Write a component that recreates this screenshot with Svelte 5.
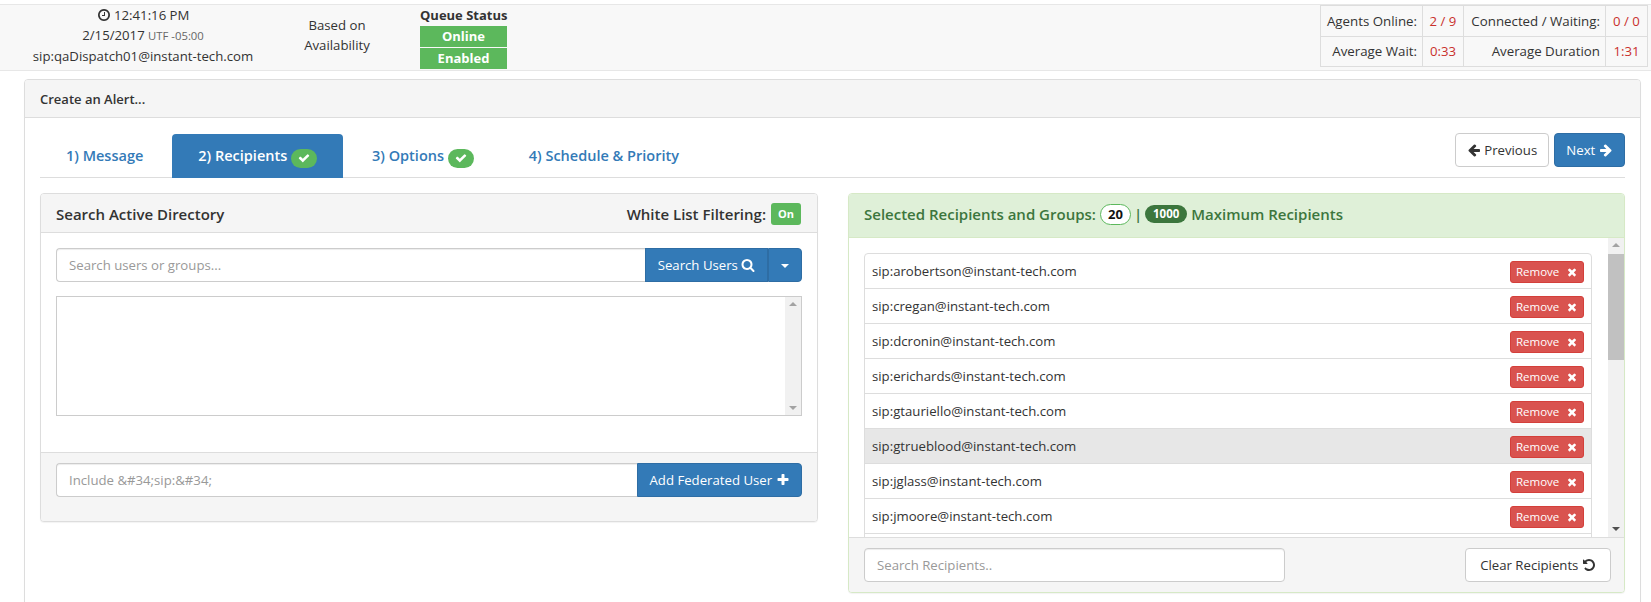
<script lang="ts">
    const icons = {
        clock: 'M1024 544v448q0 14-9 23t-23 9h-320q-14 0-23-9t-9-23v-64q0-14 9-23t23-9h224v-352q0-14 9-23t23-9h64q14 0 23 9t9 23zm416 352q0-148-73-273t-198-198-273-73-273 73-198 198-73 273 73 273 198 198 273 73 273-73 198-198 73-273zm224 0q0 209-103 385.5t-279.5 279.5-385.5 103-385.5-103-279.5-279.5-103-385.5 103-385.5 279.5-279.5 385.5-103 385.5 103 279.5 279.5 103 385.5z',
        check: 'M1671 566q0 40-28 68l-724 724-136 136q-28 28-68 28t-68-28l-136-136-362-362q-28-28-28-68t28-68l136-136q28-28 68-28t68 28l294 295 656-657q28-28 68-28t68 28l136 136q28 28 28 68z',
        times: 'M1490 1322q0 40-28 68l-136 136q-28 28-68 28t-68-28l-294-294-294 294q-28 28-68 28t-68-28l-136-136q-28-28-28-68t28-68l294-294-294-294q-28-28-28-68t28-68l136-136q28-28 68-28t68 28l294 294 294-294q28-28 68-28t68 28l136 136q28 28 28 68t-28 68l-294 294 294 294q28 28 28 68z',
        plus: 'M1600 736v192q0 40-28 68t-68 28h-416v416q0 40-28 68t-68 28h-192q-40 0-68-28t-28-68v-416h-416q-40 0-68-28t-28-68v-192q0-40 28-68t68-28h416v-416q0-40 28-68t68-28h192q40 0 68 28t28 68v416h416q40 0 68 28t28 68z',
        search: 'M1216 832q0-185-131.5-316.5t-316.5-131.5-316.5 131.5-131.5 316.5 131.5 316.5 316.5 131.5 316.5-131.5 131.5-316.5zm512 832q0 52-38 90t-90 38q-54 0-90-38l-343-342q-179 124-399 124-143 0-273.5-55.5t-225-150-150-225-55.5-273.5 55.5-273.5 150-225 225-150 273.5-55.5 273.5 55.5 225 150 150 225 55.5 273.5q0 220-124 399l343 343q37 37 37 90z',
        left: 'M1664 896v128q0 53-32.5 90.5t-84.5 37.5h-704l293 294q38 36 38 90t-38 90l-75 76q-37 37-90 37-52 0-91-37l-651-652q-37-37-37-90 0-52 37-91l651-650q38-38 91-38 52 0 90 38l75 74q38 38 38 91t-38 91l-293 293h704q52 0 84.5 37.5t32.5 90.5z',
        right: 'M1600 960q0 54-37 91l-651 651q-39 37-91 37-51 0-90-37l-75-75q-38-38-38-91t38-91l293-293h-704q-52 0-84.5-37.5t-32.5-90.5v-128q0-53 32.5-90.5t84.5-37.5h704l-293-294q-38-36-38-90t38-90l75-75q38-38 90-38 53 0 91 38l651 651q37 35 37 90z',
        undo: 'M1664 896q0 156-61 298t-164 245-245 164-298 61q-172 0-327-72.5t-264-204.5q-7-10-6.5-22.5t8.5-20.5l137-138q10-9 25-9 16 2 23 12 73 95 179 147t225 52q104 0 198.5-40.5t163.5-109.5 109.5-163.5 40.5-198.5-40.5-198.5-109.5-163.5-163.5-109.5-198.5-40.5q-98 0-188 35.5t-160 101.5l137 138q31 30 14 69-17 40-59 40h-448q-26 0-45-19t-19-45v-448q0-42 40-59 39-17 69 14l130 129q107-101 244.5-156.5t284.5-55.5q156 0 298 61t245 164 164 245 61 298z'
    };

    // last row is cut off by the scroll area, same as the real list
    const recipients = [
        'arobertson', 'cregan', 'dcronin', 'erichards', 'gtauriello',
        'gtrueblood', 'jglass', 'jmoore'
    ];
    const hovered = 'gtrueblood';
</script>

{#snippet icon(name: keyof typeof icons)}
    <svg class="icon" viewBox="0 0 1792 1792" aria-hidden="true"><path d={icons[name]} /></svg>
{/snippet}

{#snippet okBadge()}
    <span class="ok-badge">{@render icon('check')}</span>
{/snippet}

<header class="status-bar">
    <div class="clock-cell">
        <div>{@render icon('clock')} 12:41:16 PM</div>
        <div>2/15/2017 <small>UTF -05:00</small></div>
        <div>sip:qaDispatch01@instant-tech.com</div>
    </div>
    <div class="based-cell">Based on<br />Availability</div>
    <div class="queue-cell">
        <div class="queue-title">Queue Status</div>
        <div class="queue-pill">Online</div>
        <div class="queue-pill">Enabled</div>
    </div>
    <table class="stats">
        <tbody>
            <tr>
                <td class="lbl w1">Agents Online:</td>
                <td class="val w2">2 / 9</td>
                <td class="lbl w3">Connected / Waiting:</td>
                <td class="val w4">0 / 0</td>
            </tr>
            <tr>
                <td class="lbl">Average Wait:</td>
                <td class="val">0:33</td>
                <td class="lbl">Average Duration</td>
                <td class="val">1:31</td>
            </tr>
        </tbody>
    </table>
</header>

<main class="alert-panel">
    <div class="alert-heading">Create an Alert...</div>
    <div class="alert-body">
        <div class="wizard-nav">
            <nav class="tabs">
                <a class="tab">1) Message</a>
                <a class="tab active">2) Recipients {@render okBadge()}</a>
                <a class="tab">3) Options {@render okBadge()}</a>
                <a class="tab">4) Schedule &amp; Priority</a>
            </nav>
            <div class="wizard-btns">
                <button class="btn btn-default prev-btn">{@render icon('left')} Previous</button>
                <button class="btn btn-primary next-btn">Next {@render icon('right')}</button>
            </div>
        </div>

        <div class="columns">
            <section class="panel search-panel">
                <div class="panel-heading">
                    <span>Search Active Directory</span>
                    <span class="filter">White List Filtering: <span class="on-label">On</span></span>
                </div>
                <div class="search-body">
                    <div class="input-group">
                        <input class="form-control" placeholder="Search users or groups..." />
                        <button class="btn btn-primary joined search-btn">Search Users {@render icon('search')}</button>
                        <button class="btn btn-primary caret-btn" aria-label="More"><span class="caret"></span></button>
                    </div>
                    <div class="results-box">
                        <div class="scrollbar">
                            <span class="arrow up"></span>
                            <span class="arrow down"></span>
                        </div>
                    </div>
                </div>
                <div class="panel-footer federated">
                    <div class="input-group">
                        <input class="form-control" placeholder="Include &amp;#34;sip:&amp;#34;" />
                        <button class="btn btn-primary joined add-btn">Add Federated User {@render icon('plus')}</button>
                    </div>
                </div>
            </section>

            <section class="panel selected-panel">
                <div class="panel-heading success">
                    <span>Selected Recipients and Groups:</span>
                    <span class="count">20</span>
                    <span class="pipe">|</span>
                    <span class="max">1000</span>
                    <span>Maximum Recipients</span>
                </div>
                <div class="recipient-scroll">
                    <ul class="list">
                        {#each recipients as name}
                            <li class="list-item" class:hover={name === hovered}>
                                <span>sip:{name}@instant-tech.com</span>
                                <button class="btn-remove">Remove {@render icon('times')}</button>
                            </li>
                        {/each}
                        <li class="list-item"></li>
                    </ul>
                    <div class="scrollbar">
                        <span class="arrow up"></span>
                        <span class="thumb"></span>
                        <span class="arrow down"></span>
                    </div>
                </div>
                <div class="panel-footer recipient-footer">
                    <input class="form-control rounded" placeholder="Search Recipients.." />
                    <button class="btn btn-default clear-btn">Clear Recipients {@render icon('undo')}</button>
                </div>
            </section>
        </div>
    </div>
</main>

<style>
    :global(body) {
        margin: 0;
        overflow: hidden;
        background: #fff;
        color: #333;
        font-family: "Open Sans", "Liberation Sans", sans-serif;
        font-size: 13.2px;
        line-height: 20px;
    }

    * {
        box-sizing: border-box;
    }

    .icon {
        display: inline-block;
        width: 14px;
        height: 14px;
        fill: currentColor;
        vertical-align: -2px;
    }

    .status-bar {
        display: flex;
        height: 67px;
        margin-top: 4px;
        background: #f8f8f8;
        border-top: 1px solid #e7e7e7;
        border-bottom: 1px solid #e7e7e7;
    }

    .clock-cell {
        width: 286px;
        text-align: center;
    }

    .clock-cell small {
        font-size: 11.3px;
        color: #666;
    }

    .based-cell {
        width: 102px;
        padding-top: 10px;
        text-align: center;
    }

    .queue-cell {
        width: 87px;
        margin-left: 32px;
        text-align: center;
    }

    .queue-title {
        font-size: 13px;
        font-weight: 700;
        line-height: 21px;
        white-space: nowrap;
    }

    .queue-pill {
        height: 21px;
        margin-bottom: 1px;
        background: #5cb85c;
        color: #fff;
        font-size: 13px;
        font-weight: 700;
        line-height: 21px;
    }

    .stats {
        width: 327px;
        height: 62px;
        margin-left: auto;
        margin-right: 3px;
        border-collapse: collapse;
        table-layout: fixed;
    }

    .stats td {
        padding: 0 5px;
        border: 1px solid #ddd;
        white-space: nowrap;
    }

    .lbl {
        font-size: 13.3px;
        text-align: right;
    }

    .val {
        text-align: center;
        color: #c9302c;
    }

    .w1 { width: 102px; }
    .w2 { width: 41px; }
    .w3 { width: 142px; }
    .w4 { width: 42px; }

    .alert-panel {
        width: 1617px;
        height: 600px;
        margin: 8px 0 0 24px;
        border: 1px solid #ddd;
        border-radius: 4px;
        box-shadow: 0 1px 1px rgba(0, 0, 0, 0.05);
    }

    .alert-heading {
        height: 38px;
        padding: 9px 15px;
        background: #f5f5f5;
        border-bottom: 1px solid #ddd;
        border-radius: 3px 3px 0 0;
        font-size: 13px;
        font-weight: 600;
    }

    .alert-body {
        padding: 16px 15px;
    }

    .wizard-nav {
        display: flex;
        justify-content: space-between;
        height: 44px;
        border-bottom: 1px solid #ddd;
    }

    .tabs {
        display: flex;
    }

    .tab {
        height: 44px;
        margin-right: 3px;
        padding: 12px 26px 0;
        border-radius: 4px 4px 0 0;
        color: #337ab7;
        font-size: 14.5px;
        font-weight: 600;
        white-space: nowrap;
    }

    .tab.active {
        background: #337ab7;
        color: #fff;
    }

    .ok-badge {
        display: inline-flex;
        align-items: center;
        justify-content: center;
        width: 26px;
        height: 19px;
        border-radius: 10px;
        background: #5cb85c;
        color: #fff;
        vertical-align: -3px;
    }

    .ok-badge .icon {
        width: 12px;
        height: 12px;
    }

    .wizard-btns {
        display: flex;
        gap: 5px;
        margin-top: -1px;
        height: 34px;
    }

    .btn {
        height: 34px;
        padding: 6px 12px;
        border: 1px solid transparent;
        border-radius: 4px;
        font: inherit;
        white-space: nowrap;
    }

    .btn-default {
        background: #fff;
        border-color: #ccc;
        color: #333;
    }

    .btn-primary {
        background: #337ab7;
        border-color: #2e6da4;
        color: #fff;
    }

    .prev-btn {
        width: 94px;
        padding: 6px 0;
    }

    .next-btn {
        width: 71px;
        padding: 6px 0;
    }

    .columns {
        display: flex;
        justify-content: space-between;
        align-items: flex-start;
        margin-top: 15px;
    }

    .panel {
        border: 1px solid #ddd;
        border-radius: 4px;
        box-shadow: 0 1px 1px rgba(0, 0, 0, 0.05);
        background: #fff;
    }

    .search-panel {
        width: 778px;
        height: 329px;
    }

    .selected-panel {
        width: 777px;
        height: 400px;
        border-color: #d6e9c6;
    }

    .panel-heading {
        display: flex;
        align-items: center;
        height: 39px;
        padding: 2px 15px 0;
        justify-content: space-between;
        background: #f5f5f5;
        border-bottom: 1px solid #ddd;
        border-radius: 3px 3px 0 0;
        font-size: 15px;
        font-weight: 600;
    }

    .panel-heading.success {
        height: 44px;
        padding: 0 15px 3px;
        justify-content: flex-start;
        gap: 4px;
        background: #dff0d8;
        border-bottom-color: #d6e9c6;
        color: #3c763d;
    }

    .count {
        min-width: 31px;
        height: 21px;
        border: 1px solid #5cb85c;
        border-radius: 11px;
        background: #fff;
        color: #111;
        font-size: 13px;
        font-weight: 700;
        line-height: 19px;
        text-align: center;
    }

    .pipe {
        margin: 0 -1px;
    }

    .max {
        min-width: 42px;
        height: 18px;
        border-radius: 9px;
        background: #3c763d;
        color: #fff;
        font-size: 11.5px;
        font-weight: 700;
        line-height: 18px;
        text-align: center;
    }

    .filter {
        display: flex;
        align-items: center;
        gap: 5px;
        margin-right: 1px;
    }

    .on-label {
        width: 30px;
        height: 22px;
        border-radius: 3px;
        background: #5cb85c;
        color: #fff;
        font-size: 11px;
        font-weight: 700;
        line-height: 22px;
        text-align: center;
    }

    .search-body {
        height: 219px;
        padding: 15px;
    }

    .input-group {
        display: flex;
    }

    .form-control {
        flex: 1;
        min-width: 0;
        height: 34px;
        padding: 6px 12px;
        border: 1px solid #ccc;
        border-right: 0;
        border-radius: 4px 0 0 4px;
        background: #fff;
        box-shadow: inset 0 1px 1px rgba(0, 0, 0, 0.075);
        color: #555;
        font: inherit;
        outline: none;
    }

    .form-control::placeholder {
        color: #999;
    }

    .form-control.rounded {
        flex: none;
        width: 421px;
        border-right: 1px solid #ccc;
        border-radius: 4px;
    }

    .joined {
        border-radius: 0;
    }

    .search-btn {
        width: 123px;
        padding: 6px 0;
    }

    .caret-btn {
        width: 34px;
        padding: 0;
        border-radius: 0 4px 4px 0;
    }

    .caret {
        display: inline-block;
        border-top: 4px solid #fff;
        border-left: 4px solid transparent;
        border-right: 4px solid transparent;
        vertical-align: middle;
    }

    .add-btn {
        width: 165px;
        padding: 6px 0;
        border-radius: 0 4px 4px 0;
    }

    .results-box {
        position: relative;
        display: flex;
        justify-content: flex-end;
        height: 120px;
        margin-top: 14px;
        border: 1px solid #ccc;
    }

    .scrollbar {
        display: flex;
        flex-direction: column;
        align-items: center;
        justify-content: space-between;
        flex: none;
        width: 16px;
        padding: 5px 0;
        background: #f1f1f1;
    }

    .arrow {
        flex: none;
        width: 0;
        height: 0;
        border-left: 4px solid transparent;
        border-right: 4px solid transparent;
    }

    .arrow.up {
        border-bottom: 4px solid #a3a3a3;
    }

    .arrow.down {
        border-top: 4px solid #505050;
    }

    .results-box .arrow.down {
        border-top-color: #a3a3a3;
    }

    .panel-footer {
        background: #f5f5f5;
        border-top: 1px solid #ddd;
    }

    .federated {
        height: 69px;
        padding: 10px 15px;
        border-radius: 0 0 3px 3px;
    }

    .recipient-scroll {
        display: flex;
        height: 299px;
        overflow: hidden;
    }

    .list {
        flex: 1;
        margin: 15px 16px 0 15px;
        padding: 0;
        list-style: none;
    }

    .list-item {
        display: flex;
        align-items: center;
        justify-content: space-between;
        height: 36px;
        margin-bottom: -1px;
        padding: 0 7px;
        border: 1px solid #ddd;
        background: #fff;
    }

    .list-item:first-child {
        border-radius: 4px 4px 0 0;
    }

    .list-item.hover {
        background: #e7e7e7;
    }

    .btn-remove {
        width: 74px;
        height: 22px;
        margin-top: 2px;
        padding: 0 5px;
        border: 1px solid #d43f3a;
        border-radius: 3px;
        background: #d9534f;
        color: #fff;
        font: inherit;
        font-size: 11.5px;
        line-height: 18px;
        white-space: nowrap;
        display: flex;
        align-items: center;
        justify-content: space-between;
    }

    .btn-remove .icon {
        width: 12px;
        height: 12px;
    }

    .thumb {
        flex: none;
        width: 100%;
        height: 106px;
        margin: 7px 0 auto;
        background: #c1c1c1;
    }

    .recipient-scroll .scrollbar {
        justify-content: flex-start;
    }

    .recipient-scroll .arrow.down {
        margin-bottom: 1px;
    }

    .recipient-footer {
        display: flex;
        justify-content: space-between;
        align-items: flex-start;
        height: 55px;
        padding: 10px 13px 0 15px;
        border-radius: 0 0 3px 3px;
    }

    .clear-btn {
        width: 146px;
        padding: 6px 0;
    }
</style>
